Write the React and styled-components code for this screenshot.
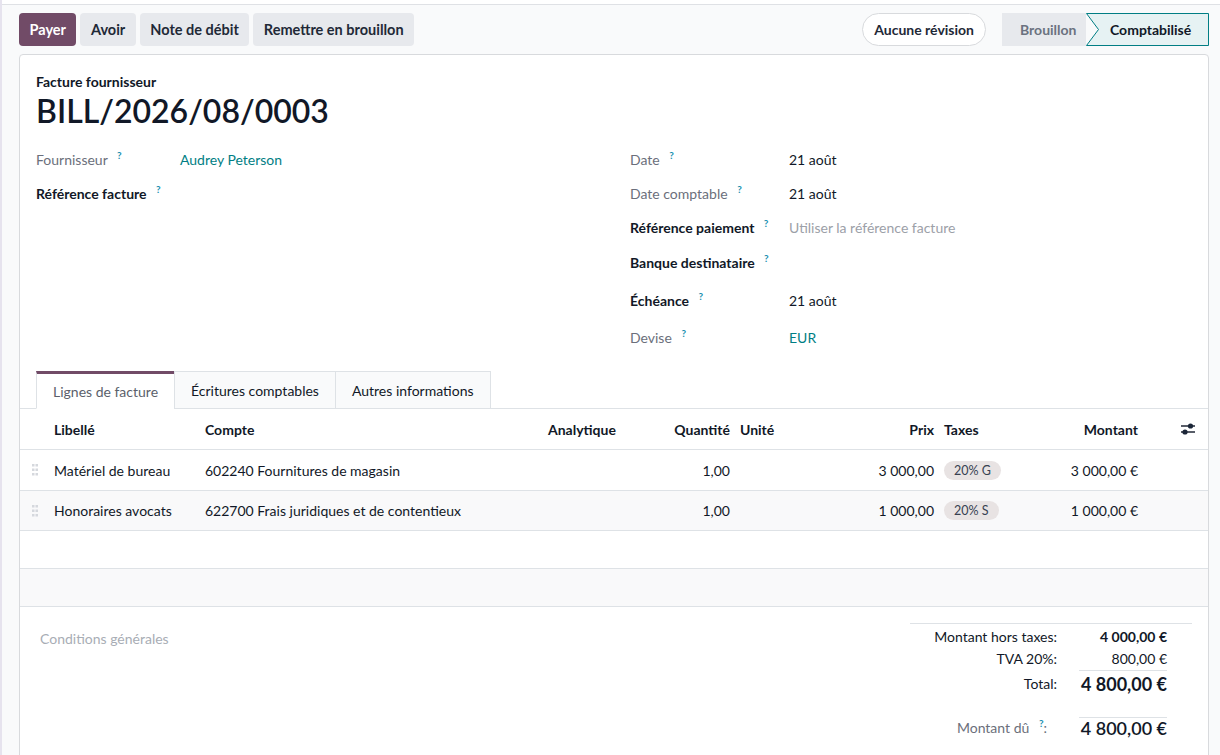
import styled, { createGlobalStyle } from "styled-components";

const GlobalStyle = createGlobalStyle`
  html, body {
    margin: 0;
    padding: 0;
  }
  body {
    background: #f9fafb;
    font-family: Lato, "Noto Sans", "DejaVu Sans", sans-serif;
    font-size: 14px;
    color: #111827;
  }
`;

const lines = [
  {
    label: "Matériel de bureau",
    account: "602240 Fournitures de magasin",
    qty: "1,00",
    price: "3 000,00",
    tax: "20% G",
    total: "3 000,00 €",
  },
  {
    label: "Honoraires avocats",
    account: "622700 Frais juridiques et de contentieux",
    qty: "1,00",
    price: "1 000,00",
    tax: "20% S",
    total: "1 000,00 €",
  },
];

const Help = () => <Sup>?</Sup>;

const DragHandle = () => (
  <svg width="6" height="12" viewBox="0 0 6 12">
    {[0, 4.5, 9].map((y) =>
      [0, 3.5].map((x) => (
        <rect key={x + "-" + y} x={x} y={y} width="2.5" height="2.5" fill="#d5d8dd" />
      ))
    )}
  </svg>
);

const SlidersIcon = () => (
  <svg width="16" height="14" viewBox="0 0 16 14">
    <line x1="1" y1="4" x2="15" y2="4" stroke="#111827" strokeWidth="1.4" />
    <line x1="1" y1="10" x2="15" y2="10" stroke="#111827" strokeWidth="1.4" />
    <circle cx="10.5" cy="4" r="2.6" fill="#1b2638" />
    <circle cx="5" cy="10" r="2.6" fill="#1b2638" />
  </svg>
);

const App = () => {
  return (
    <>
      <GlobalStyle />
      <Page>
        <TopBar />
        <ControlPanel>
          <Actions>
            <Button primary>Payer</Button>
            <Button>Avoir</Button>
            <Button>Note de débit</Button>
            <Button>Remettre en brouillon</Button>
          </Actions>
          <RightSide>
            <Pill>Aucune révision</Pill>
            <StatusBar>
              <StatusStep>Brouillon</StatusStep>
              <StatusCurrent>
                <svg viewBox="0 0 123 33" preserveAspectRatio="none">
                  <path
                    d="M0.5 0.5 H122.5 V32.5 H0.5 L12.5 16.5 Z"
                    fill="#e6f2f3"
                    stroke="#017e84"
                    strokeWidth="1"
                    vectorEffect="non-scaling-stroke"
                  />
                </svg>
                <span>Comptabilisé</span>
              </StatusCurrent>
            </StatusBar>
          </RightSide>
        </ControlPanel>

        <Sheet>
          <SheetHead>
            <Subtitle>Facture fournisseur</Subtitle>
            <Title>BILL/2026/08/0003</Title>
            <Groups>
              <Group>
                <Field>
                  <Label width={144} muted>
                    Fournisseur <Help />
                  </Label>
                  <Value link>Audrey Peterson</Value>
                </Field>
                <Field>
                  <Label width={144}>
                    Référence facture <Help />
                  </Label>
                  <Value />
                </Field>
              </Group>
              <Group>
                <Field>
                  <Label width={159} muted>
                    Date <Help />
                  </Label>
                  <Value>21 août</Value>
                </Field>
                <Field>
                  <Label width={159} muted>
                    Date comptable <Help />
                  </Label>
                  <Value>21 août</Value>
                </Field>
                <Field>
                  <Label width={159}>
                    Référence paiement <Help />
                  </Label>
                  <Value placeholder>Utiliser la référence facture</Value>
                </Field>
                <Field tall={37}>
                  <Label width={159}>
                    Banque destinataire <Help />
                  </Label>
                  <Value />
                </Field>
                <Field tall={38}>
                  <Label width={159}>
                    Échéance <Help />
                  </Label>
                  <Value>21 août</Value>
                </Field>
                <Field tall={37}>
                  <Label width={159} muted>
                    Devise <Help />
                  </Label>
                  <Value link>EUR</Value>
                </Field>
              </Group>
            </Groups>
          </SheetHead>

          <TabNav>
            <Tab active>Lignes de facture</Tab>
            <Tab>Écritures comptables</Tab>
            <Tab>Autres informations</Tab>
          </TabNav>

          <ListTable>
            <HeadRow>
              <Cell />
              <Cell>Libellé</Cell>
              <Cell>Compte</Cell>
              <Cell>Analytique</Cell>
              <Cell right>Quantité</Cell>
              <Cell>Unité</Cell>
              <Cell right>Prix</Cell>
              <Cell>Taxes</Cell>
              <Cell right>Montant</Cell>
              <Cell end>
                <SlidersIcon />
              </Cell>
            </HeadRow>
            {lines.map((line, index) => (
              <Row key={line.label} striped={index % 2 === 1} h={index === 0 ? 40 : 39}>
                <Cell center>
                  <DragHandle />
                </Cell>
                <Cell>{line.label}</Cell>
                <Cell>{line.account}</Cell>
                <Cell />
                <Cell right>{line.qty}</Cell>
                <Cell />
                <Cell right>{line.price}</Cell>
                <Cell>
                  <TaxBadge>{line.tax}</TaxBadge>
                </Cell>
                <Cell right>{line.total}</Cell>
                <Cell />
              </Row>
            ))}
            <EmptyRow />
            <EmptyRow striped />
          </ListTable>

          <Footer>
            <Terms>Conditions générales</Terms>
            <Totals>
              <TotalLabel top>Montant hors taxes:</TotalLabel>
              <TotalValue top strong>
                4 000,00 €
              </TotalValue>
              <TotalLabel>TVA 20%:</TotalLabel>
              <TotalValue>800,00 €</TotalValue>
              <TotalLabel big>Total:</TotalLabel>
              <TotalValue big strong ruled>
                4 800,00 €
              </TotalValue>
              <TotalLabel due muted>
                Montant dû <Help />:
              </TotalLabel>
              <TotalValue due ruled>
                4 800,00 €
              </TotalValue>
            </Totals>
          </Footer>
        </Sheet>
      </Page>
    </>
  );
};

const Page = styled.div`
  min-height: 100vh;
  border-left: 2px solid #e6e3ee;
  background: #f9fafb;
`;

const TopBar = styled.div`
  height: 4px;
  background: #fff;
  border-bottom: 1px solid #dfe1e5;
`;

const ControlPanel = styled.div`
  display: flex;
  justify-content: space-between;
  align-items: center;
  padding: 8px 11px 8px 17px;
`;

const Actions = styled.div`
  display: flex;
  gap: 4px;
`;

const Button = styled.button`
  height: 33px;
  padding: 0 10.5px;
  border: none;
  border-radius: 4px;
  font-family: inherit;
  font-size: 14.5px;
  font-weight: 700;
  background: ${(p) => (p.primary ? "#714b67" : "#e7e9ed")};
  color: ${(p) => (p.primary ? "#fff" : "#1f2937")};
`;

const RightSide = styled.div`
  display: flex;
  align-items: center;
  gap: 16px;
`;

const Pill = styled.div`
  height: 33px;
  box-sizing: border-box;
  display: flex;
  align-items: center;
  padding: 0 11px;
  border: 1px solid #d8dadd;
  border-radius: 17px;
  background: #fff;
  font-weight: 700;
  color: #1f2937;
`;

const StatusBar = styled.div`
  display: flex;
  height: 33px;
`;

const StatusStep = styled.div`
  display: flex;
  align-items: center;
  width: 84px;
  box-sizing: border-box;
  padding-left: 18px;
  background: #e7e9ed;
  color: #6b7280;
  font-weight: 700;
`;

const StatusCurrent = styled.div`
  position: relative;
  display: flex;
  align-items: center;
  width: 123px;
  box-sizing: border-box;
  padding-left: 24px;
  font-weight: 700;
  color: #111827;

  svg {
    position: absolute;
    inset: 0;
    width: 100%;
    height: 100%;
  }
  span {
    position: relative;
  }
`;

const Sheet = styled.div`
  margin: 0 11px 0 17px;
  padding-bottom: 40px;
  background: #fff;
  border: 1px solid #d8dadd;
  border-radius: 4px 4px 0 0;
`;

const SheetHead = styled.div`
  padding: 16px 16px 0;
`;

const Subtitle = styled.div`
  font-weight: 700;
  line-height: 21px;
`;

const Title = styled.h1`
  margin: 0;
  font-size: 32px;
  line-height: 38px;
  font-weight: 600;
  color: #111827;
`;

const Groups = styled.div`
  display: grid;
  grid-template-columns: 1fr 1fr;
  column-gap: 32px;
  margin-top: 12px;
`;

const Group = styled.div`
  display: flex;
  flex-direction: column;
`;

const Field = styled.div`
  display: flex;
  align-items: center;
  height: ${(p) => p.tall || 34}px;
`;

const Label = styled.div`
  width: ${(p) => p.width}px;
  flex-shrink: 0;
  font-weight: ${(p) => (p.muted ? 400 : 700)};
  color: ${(p) => (p.muted ? "#6b6f7b" : "#111827")};
`;

const Sup = styled.sup`
  margin-left: 6px;
  font-size: 10px;
  line-height: 0;
  font-weight: 700;
  color: #1a8fb0;
`;

const Value = styled.div`
  color: ${(p) => (p.link ? "#017e84" : p.placeholder ? "#9ca0a8" : "#111827")};
`;

const TabNav = styled.div`
  display: flex;
  margin-top: 15px;
  padding-left: 16px;
  border-bottom: 1px solid #dee2e6;
`;

const Tab = styled.div`
  height: 38px;
  box-sizing: border-box;
  display: flex;
  align-items: center;
  padding: 0 16px;
  margin-bottom: -1px;
  margin-left: ${(p) => (p.active ? 0 : -1)}px;
  border: 1px solid #dee2e6;
  border-top: ${(p) => (p.active ? "3px solid #714b67" : "1px solid #dee2e6")};
  border-bottom: ${(p) => (p.active ? "1px solid #fff" : "1px solid #dee2e6")};
  background: ${(p) => (p.active ? "#fff" : "#f9fafb")};
  color: ${(p) => (p.active ? "#5b5f6b" : "#111827")};
  &:first-child {
    margin-left: 0;
  }
`;

const columns = "29px 151px 343px 97px 95px 105px 99px 101px 103px 1fr";

const ListTable = styled.div`
  display: flex;
  flex-direction: column;
`;

const HeadRow = styled.div`
  display: grid;
  grid-template-columns: ${columns};
  height: 40px;
  align-items: center;
  border-bottom: 1px solid #dee2e6;
  font-weight: 700;
`;

const Row = styled.div`
  display: grid;
  grid-template-columns: ${columns};
  height: ${(p) => p.h}px;
  align-items: center;
  border-bottom: 1px solid #dee2e6;
  background: ${(p) => (p.striped ? "#f9f9fa" : "#fff")};
`;

const EmptyRow = styled.div`
  height: 37px;
  border-bottom: 1px solid #dee2e6;
  background: ${(p) => (p.striped ? "#f9f9fa" : "#fff")};
`;

const Cell = styled.div`
  display: flex;
  align-items: center;
  padding: 0 5px;
  white-space: nowrap;
  justify-content: ${(p) =>
    p.right ? "flex-end" : p.center ? "center" : p.end ? "flex-end" : "flex-start"};
  padding-right: ${(p) => (p.end ? 12 : 5)}px;
`;

const TaxBadge = styled.span`
  display: inline-block;
  padding: 2px 10px;
  border-radius: 10px;
  background: #e8e3e3;
  font-size: 12.5px;
  color: #374151;
`;

const Footer = styled.div`
  display: flex;
  justify-content: space-between;
  align-items: flex-start;
  padding: 16px 16px 0;
`;

const Terms = styled.div`
  margin-top: 5px;
  padding-left: 4px;
  line-height: 21px;
  color: #a8adb5;
`;

const Totals = styled.div`
  width: 282px;
  box-sizing: border-box;
  padding-right: 25px;
  border-top: 1px solid #dee2e6;
  display: grid;
  grid-template-columns: 147px 1fr;
  column-gap: 22px;
`;

const rowHeight = (p) => (p.big ? 28 : p.due ? 24 : 23);

const TotalLabel = styled.div`
  text-align: right;
  white-space: nowrap;
  box-sizing: border-box;
  padding-top: ${(p) => (p.top ? 1 : 0)}px;
  margin-top: ${(p) => (p.due ? 19 : 0)}px;
  padding-right: ${(p) => (p.due ? 10 : 0)}px;
  height: ${rowHeight}px;
  line-height: ${(p) => (p.big ? 28 : p.due ? 22 : 23)}px;
  color: ${(p) => (p.muted ? "#6b6f7b" : "#111827")};
`;

const TotalValue = styled.div`
  text-align: right;
  white-space: nowrap;
  box-sizing: border-box;
  padding-top: ${(p) => (p.top ? 1 : 0)}px;
  margin-top: ${(p) => (p.due ? 19 : 0)}px;
  height: ${rowHeight}px;
  line-height: ${(p) => (p.big ? 27 : p.due ? 21 : 23)}px;
  font-size: ${(p) => (p.big || p.due ? 18 : 14)}px;
  font-weight: ${(p) => (p.strong ? 700 : p.due ? 600 : 400)};
  border-top: ${(p) => (p.ruled ? "1px solid #dee2e6" : "none")};
`;

export default App;
